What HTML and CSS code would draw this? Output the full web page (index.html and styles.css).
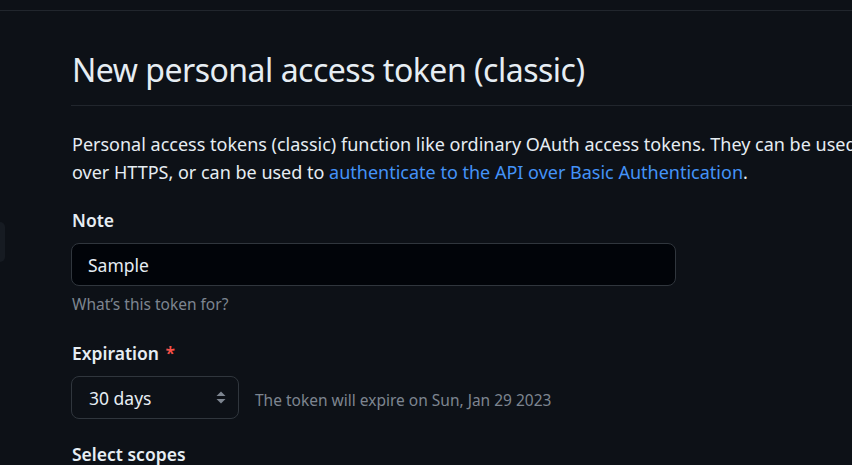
FILE: index.html
```html
<!DOCTYPE html>
<html lang="en">
<head>
<meta charset="utf-8">
<title>New personal access token (classic)</title>
<link rel="stylesheet" href="styles.css">
</head>
<body>
<div class="topbar"></div>
<div class="layout">
  <aside class="sidebar">
    <div class="nav-item"></div>
  </aside>
  <main class="content">
    <div class="subhead">
      <h1 class="subhead-heading">New personal access token (classic)</h1>
    </div>
    <p class="intro">Personal access tokens (classic) function like ordinary OAuth access tokens. They can be used<br>over HTTPS, or can be used to <a href="#" class="link">authenticate to the API over Basic Authentication</a>.</p>

    <div class="form-group">
      <label class="label" for="note">Note</label>
      <input id="note" class="input" type="text" value="Sample">
      <p class="note-hint">What’s this token for?</p>
    </div>

    <div class="form-group expiration">
      <label class="label" for="exp">Expiration <span class="required">*</span></label>
      <div class="exp-row">
        <div class="select" id="exp">
          <span>30 days</span>
          <svg class="select-arrows" width="10" height="13" viewBox="0 0 10 13" aria-hidden="true">
            <path d="M5 0.5 L9.5 5 H0.5 Z" fill="#7d8590"/>
            <path d="M5 12.5 L9.5 8 H0.5 Z" fill="#7d8590"/>
          </svg>
        </div>
        <span class="exp-note">The token will expire on Sun, Jan 29 2023</span>
      </div>
    </div>

    <h2 class="scopes">Select scopes</h2>
  </main>
</div>
</body>
</html>
```
FILE: styles.css
```css
html, body {
  margin: 0;
  padding: 0;
  background: #0d1117;
  overflow: hidden;
  width: 852px;
  height: 465px;
}
body {
  font-family: "Segoe UI", "Noto Sans", sans-serif;
  color: #e6edf3;
}
.topbar {
  height: 10px;
  border-bottom: 1px solid #21262d;
}
.layout {
  display: flex;
  width: 852px;
  overflow: hidden;
}
.sidebar {
  width: 71px;
  flex-shrink: 0;
}
.nav-item {
  margin-top: 211px;
  width: 5px;
  height: 40px;
  background: #161b22;
  border-radius: 0 6px 6px 0;
}
.content {
  flex: 1;
  min-width: 0;
}
.subhead {
  margin-top: 36px;
  padding-bottom: 12px;
  border-bottom: 1px solid #21262d;
}
.subhead-heading {
  margin: 0;
  font-size: 32px;
  letter-spacing: -0.5px;
  line-height: 46px;
  font-weight: 400;
  padding-left: 1px;
}
.intro {
  margin: 24px 0 0 1px;
  font-size: 18px;
  line-height: 28px;
  white-space: nowrap;
}
.link {
  color: #4493f8;
  text-decoration: none;
}
.form-group {
  margin-top: 22px;
  padding-left: 1px;
}
.label {
  display: block;
  font-size: 17.5px;
  line-height: 24px;
  font-weight: 600;
  margin-bottom: 11px;
}
.required {
  color: #f85149;
  font-weight: 600;
  margin-left: 2px;
}
.input {
  display: block;
  box-sizing: border-box;
  width: 605px;
  height: 43px;
  margin: 0 0 0 -1px;
  padding: 0 16px;
  background: #010409;
  border: 1px solid #30363d;
  border-radius: 8px;
  color: #e6edf3;
  font-family: inherit;
  font-size: 17.5px;
  outline: none;
}
.note-hint {
  margin: 7px 0 0;
  font-size: 15.5px;
  line-height: 22px;
  color: #7d8590;
}
.expiration {
  margin-top: 26px;
}
.exp-row {
  display: flex;
  align-items: center;
  gap: 16px;
}
.select {
  box-sizing: border-box;
  width: 168px;
  height: 43px;
  margin-left: -1px;
  padding: 0 12px 0 17px;
  display: flex;
  align-items: center;
  justify-content: space-between;
  border: 1px solid #30363d;
  border-radius: 8px;
  background: #0d1117;
  font-size: 17.5px;
}
.exp-note {
  font-size: 15.5px;
  color: #7d8590;
  margin-top: 4px;
}
.scopes {
  margin: 23px 0 0 1px;
  font-size: 17.5px;
  line-height: 24px;
  font-weight: 600;
}
```
